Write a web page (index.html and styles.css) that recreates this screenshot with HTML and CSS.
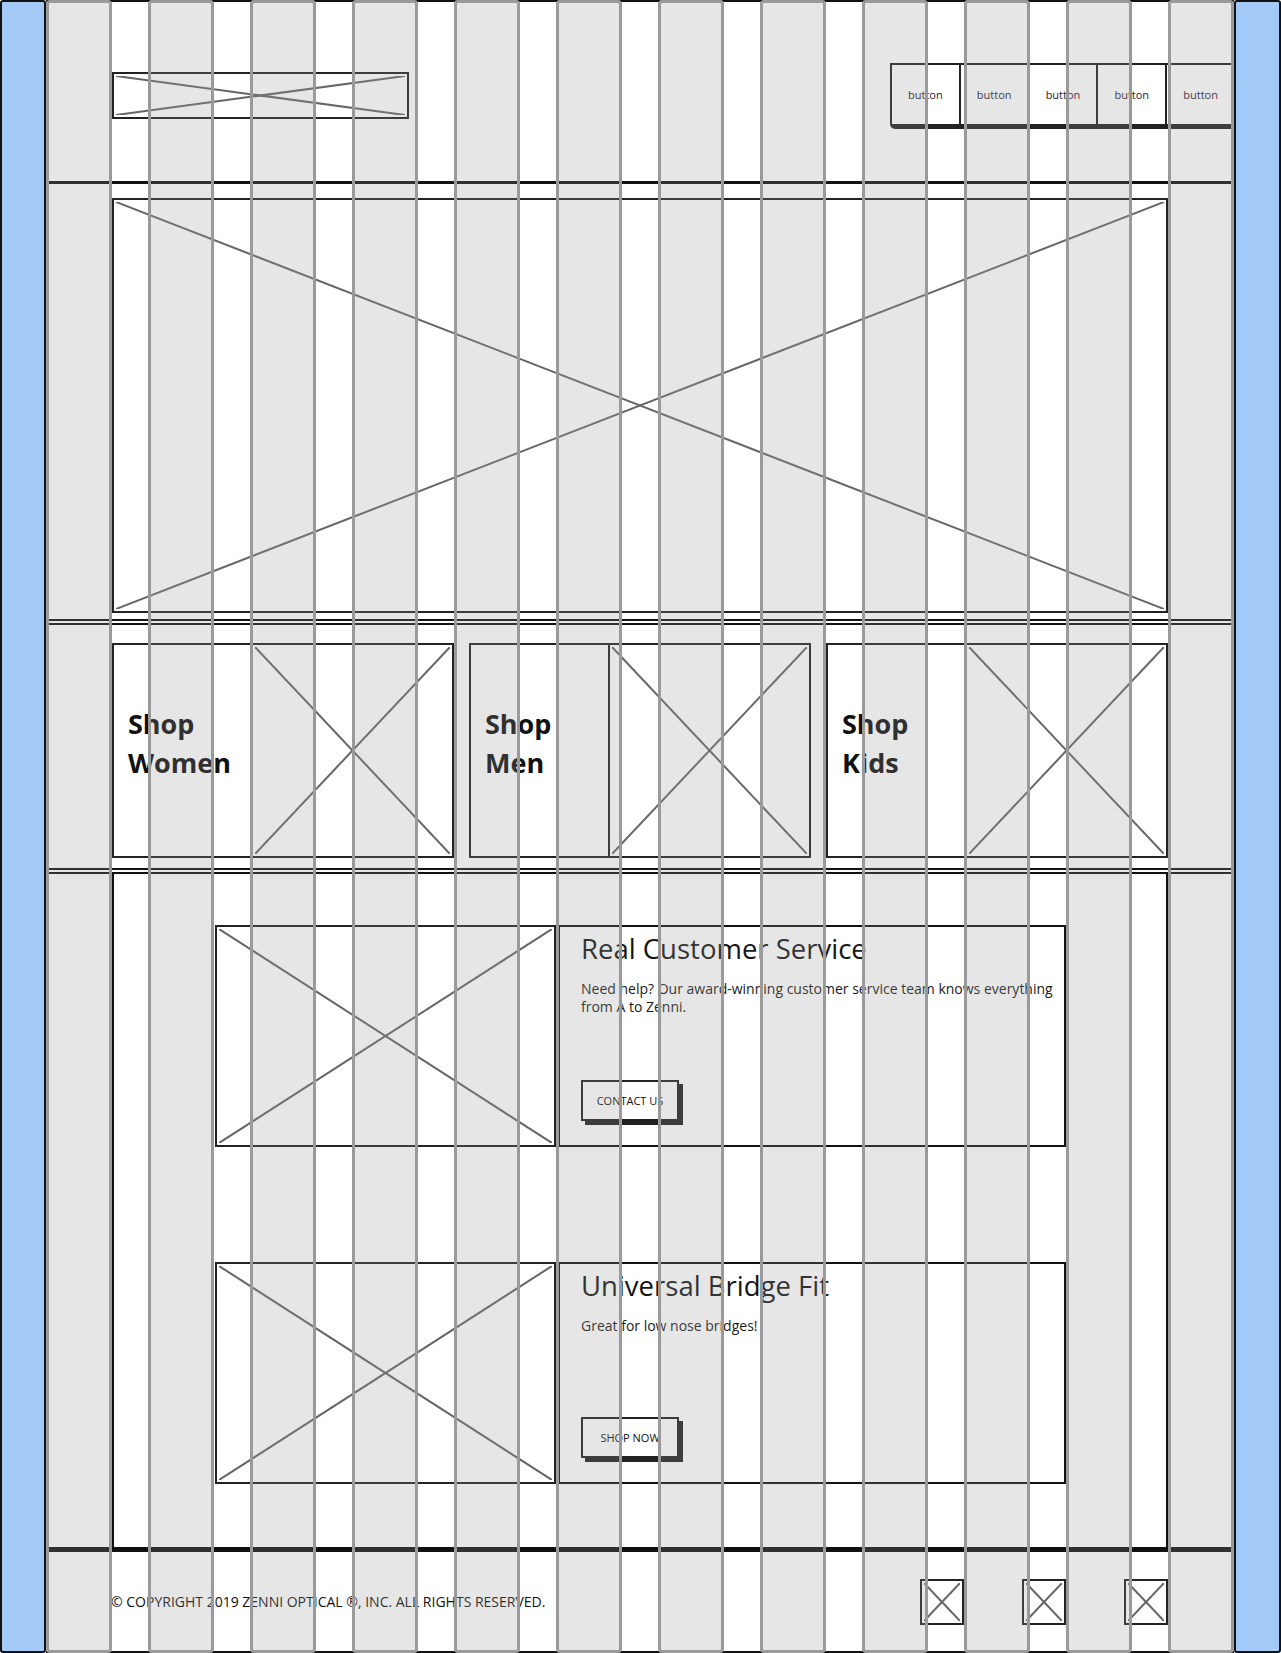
FILE: index.html
```html
<!DOCTYPE html>
<html lang="en">
<head>
  <meta charset="UTF-8">
  <title>Zenni Optical - Wireframe</title>
  <link rel="stylesheet" href="styles.css">
</head>
<body>
  <div class="page">
    <aside class="rail"></aside>

    <main class="main">
      <header class="topbar">
        <div class="ph logo">
          <svg class="x" viewBox="0 0 100 100" preserveAspectRatio="none"><line x1="0" y1="0" x2="100" y2="100"/><line x1="100" y1="0" x2="0" y2="100"/></svg>
        </div>
        <nav class="btnbar">
          <span>button</span>
          <span>button</span>
          <span>button</span>
          <span>button</span>
          <span>button</span>
        </nav>
      </header>

      <section class="hero">
        <div class="ph hero-img">
          <svg class="x" viewBox="0 0 100 100" preserveAspectRatio="none"><line x1="0" y1="0" x2="100" y2="100"/><line x1="100" y1="0" x2="0" y2="100"/></svg>
        </div>
      </section>

      <section class="shop">
        <div class="shop-card">
          <div class="shop-label">Shop<br>Women</div>
          <div class="ph shop-img">
            <svg class="x" viewBox="0 0 100 100" preserveAspectRatio="none"><line x1="0" y1="0" x2="100" y2="100"/><line x1="100" y1="0" x2="0" y2="100"/></svg>
          </div>
        </div>
        <div class="shop-card">
          <div class="shop-label">Shop<br>Men</div>
          <div class="ph shop-img">
            <svg class="x" viewBox="0 0 100 100" preserveAspectRatio="none"><line x1="0" y1="0" x2="100" y2="100"/><line x1="100" y1="0" x2="0" y2="100"/></svg>
          </div>
        </div>
        <div class="shop-card">
          <div class="shop-label">Shop<br>Kids</div>
          <div class="ph shop-img">
            <svg class="x" viewBox="0 0 100 100" preserveAspectRatio="none"><line x1="0" y1="0" x2="100" y2="100"/><line x1="100" y1="0" x2="0" y2="100"/></svg>
          </div>
        </div>
      </section>

      <section class="features">
        <div class="features-box">
          <article class="feature">
            <div class="ph feature-img">
              <svg class="x" viewBox="0 0 100 100" preserveAspectRatio="none"><line x1="0" y1="0" x2="100" y2="100"/><line x1="100" y1="0" x2="0" y2="100"/></svg>
            </div>
            <div class="feature-text">
              <h2>Real Customer Service</h2>
              <p>Need help? Our award-winning customer service team knows everything from A to Zenni.</p>
              <a class="sketch-btn" href="#">CONTACT US</a>
            </div>
          </article>

          <article class="feature">
            <div class="ph feature-img">
              <svg class="x" viewBox="0 0 100 100" preserveAspectRatio="none"><line x1="0" y1="0" x2="100" y2="100"/><line x1="100" y1="0" x2="0" y2="100"/></svg>
            </div>
            <div class="feature-text">
              <h2>Universal Bridge Fit</h2>
              <p>Great for low nose bridges!</p>
              <a class="sketch-btn" href="#">SHOP NOW</a>
            </div>
          </article>
        </div>
      </section>

      <footer class="footer">
        <p class="copyright">© COPYRIGHT 2019 ZENNI OPTICAL ®, INC. ALL RIGHTS RESERVED.</p>
        <div class="social">
          <div class="ph icon"><svg class="x" viewBox="0 0 100 100" preserveAspectRatio="none"><line x1="0" y1="0" x2="100" y2="100"/><line x1="100" y1="0" x2="0" y2="100"/></svg></div>
          <div class="ph icon"><svg class="x" viewBox="0 0 100 100" preserveAspectRatio="none"><line x1="0" y1="0" x2="100" y2="100"/><line x1="100" y1="0" x2="0" y2="100"/></svg></div>
          <div class="ph icon"><svg class="x" viewBox="0 0 100 100" preserveAspectRatio="none"><line x1="0" y1="0" x2="100" y2="100"/><line x1="100" y1="0" x2="0" y2="100"/></svg></div>
        </div>
      </footer>
    </main>

    <aside class="rail"></aside>

    <!-- 12 column grid overlay -->
    <div class="grid-overlay">
      <div></div><div></div><div></div><div></div><div></div><div></div>
      <div></div><div></div><div></div><div></div><div></div><div></div>
    </div>
  </div>
</body>
</html>
```

FILE: styles.css
```css
* {
  margin: 0;
  padding: 0;
  box-sizing: border-box;
}

html, body {
  background: #fff;
  color: #111;
  font-family: "Open Sans", "Noto Sans", sans-serif;
}

.page {
  position: relative;
  display: flex;
  width: 1281px;
  height: 1653px;
}

/* side rails */
.rail {
  width: 46px;
  flex: none;
  background: #a3caf7;
  border: 2px solid #111;
  border-radius: 3px;
}
.rail:last-of-type {
  width: 47px;
}

.main {
  flex: 1;
  display: flex;
  flex-direction: column;
  border-top: 2px solid #111;
  border-bottom: 2px solid #111;
}

/* placeholder with a cross */
.ph {
  position: relative;
  background: #fff;
  border: 2px solid #222;
}
.ph .x {
  display: block;
  width: 100%;
  height: 100%;
  padding: 2px;
}
.ph .x line {
  stroke: #666;
  stroke-width: 2;
  vector-effect: non-scaling-stroke;
}

/* Header */
.topbar {
  height: 182px;
  padding: 8px 0 0 66px;
  display: flex;
  align-items: center;
  justify-content: space-between;
  border-bottom: 3px solid #111;
}
.logo {
  width: 297px;
  height: 47px;
}
.btnbar {
  display: flex;
  width: 344px;
  height: 66px;
  border-top: 2px solid #222;
  border-left: 2px solid #222;
  border-bottom: 5px solid #222;
  border-bottom-left-radius: 5px;
  background: #fff;
}
.btnbar span {
  flex: 1;
  display: flex;
  align-items: center;
  justify-content: center;
  font-size: 11px;
  color: #2a2233;
  border-right: 2px solid #222;
}
.btnbar span:last-child {
  border-right: none;
}

/* Hero */
.hero {
  padding: 14px 66px 6px 66px;
  border-bottom: 6px double #111;
}
.hero-img {
  height: 415px;
}

/* Shop */
.shop {
  display: grid;
  grid-template-columns: repeat(3, 1fr);
  gap: 15px;
  padding: 18px 66px 10px 66px;
  border-bottom: 6px double #111;
}
.shop-card {
  display: flex;
  height: 215px;
}
.shop-label {
  width: 141px;
  padding: 59px 0 0 14px;
  background: #fff;
  border: 2px solid #222;
  font-size: 27px;
  font-weight: 700;
  line-height: 39px;
  color: #111;
}
.shop-img {
  flex: 1;
  margin-left: -2px;
}

/* Features */
.features {
  padding: 0 66px 0 66px;
  border-bottom: 5px solid #111;
}
.features-box {
  height: 100%;
  padding: 51px 100px 0 101px;
  background: #fff;
  border-left: 2px solid #111;
  border-right: 2px solid #111;
  display: flex;
  flex-direction: column;
  gap: 115px;
  min-height: 673px;
}
.feature {
  display: flex;
  gap: 2px;
  height: 222px;
}
.feature-img {
  width: 341px;
  flex: none;
}
.feature-text {
  flex: 1;
  display: flex;
  flex-direction: column;
  align-items: flex-start;
  padding: 7px 8px 24px 21px;
  background: #fff;
  border: 2px solid #111;
}
.feature-text h2 {
  font-size: 27.5px;
  font-weight: 400;
  line-height: 30px;
  color: #151515;
}
.feature-text p {
  margin-top: 16px;
  font-size: 14px;
  line-height: 18px;
  color: #1a1a1a;
}
.sketch-btn {
  margin-top: auto;
  width: 98px;
  height: 41px;
  display: flex;
  align-items: center;
  justify-content: center;
  font-size: 11px;
  color: #111;
  text-decoration: none;
  background: #fff;
  border: 2px solid #222;
  box-shadow: 4px 4px 0 #222;
}

/* Footer */
.footer {
  flex: 1;
  display: flex;
  align-items: center;
  justify-content: space-between;
  padding: 0 66px 0 65px;
}
.copyright {
  font-size: 14px;
  color: #111;
}
.social {
  display: flex;
  gap: 58px;
}
.icon {
  width: 44px;
  height: 46px;
}

/* Column grid overlay */
.grid-overlay {
  position: absolute;
  top: 0;
  bottom: 0;
  left: 46px;
  display: grid;
  grid-template-columns: repeat(12, 66px);
  gap: 36px;
  pointer-events: none;
}
.grid-overlay div {
  background: rgba(149, 149, 149, 0.24);
  border: 3px solid #9a9a9a;
  border-radius: 4px;
}
```
